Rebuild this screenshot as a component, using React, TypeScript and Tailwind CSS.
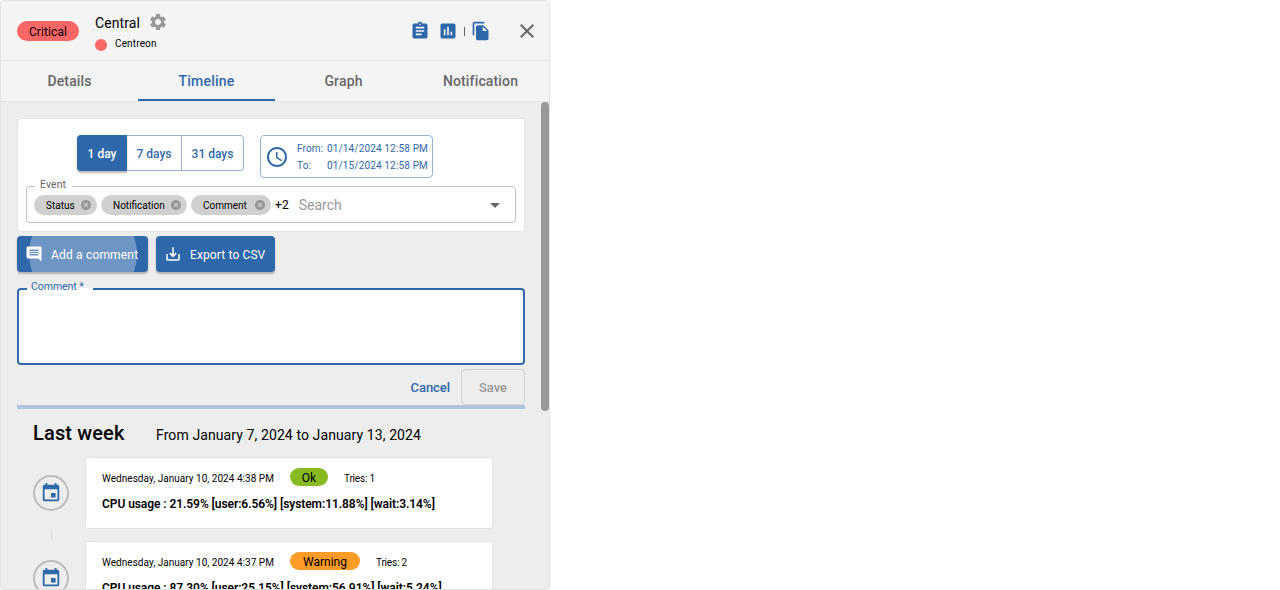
import type { ReactNode } from 'react';
import {
  MdSettings,
  MdAssignment,
  MdAssessment,
  MdFileCopy,
  MdClose,
  MdAccessTime,
  MdCancel,
  MdArrowDropDown,
  MdComment,
  MdSaveAlt,
  MdEvent,
} from 'react-icons/md';

const tabs = ['Details', 'Timeline', 'Graph', 'Notification'];

const events = [
  {
    date: 'Wednesday, January 10, 2024 4:38 PM',
    status: 'Ok',
    statusClass: 'w-[38px] bg-[#88b922]',
    tries: 'Tries: 1',
    text: 'CPU usage : 21.59% [user:6.56%] [system:11.88%] [wait:3.14%]',
  },
  {
    date: 'Wednesday, January 10, 2024 4:37 PM',
    status: 'Warning',
    statusClass: 'w-[70px] bg-[#fd9b27]',
    tries: 'Tries: 2',
    text: 'CPU usage : 87.30% [user:25.15%] [system:56.91%] [wait:5.24%]',
  },
];

function Header() {
  return (
    <header className="flex h-[60px] shrink-0 items-start border-b border-[#e3e3e3] bg-[#f4f4f4] pl-4">
      <div className="mt-5 flex h-5 w-[62px] items-center justify-center rounded-full bg-[#ff6666] text-xs tracking-[0.1px]">
        <span className="mt-[2px]">Critical</span>
      </div>
      <div className="ml-4 mt-3 flex flex-col">
        <div className="flex h-[20px] items-center text-sm leading-5 tracking-[0.1px]">
          <span className="w-[45px]">Central</span>
          <MdSettings className="ml-[8px] -mt-[2px] size-5 text-[#999999]" />
        </div>
        <div className="mt-px flex h-5 items-center text-[10px] tracking-[0.15px]">
          <span className="mt-px size-3 rounded-full bg-[#ff6666]" />
          <span className="-mt-px ml-2">Centreon</span>
        </div>
      </div>
      <div className="ml-auto flex h-[60px] items-center">
        <MdAssignment className="size-5 text-[#2e68aa]" />
        <MdAssessment className="ml-2 size-5 text-[#2e68aa]" />
        <span className="ml-[6px] h-[9px] w-px bg-[#666666]" />
        <MdFileCopy className="ml-[6px] size-5 text-[#2e68aa]" />
        <MdClose className="ml-[24px] mr-[10px] size-6 text-[#666666]" />
      </div>
    </header>
  );
}

function Tabs() {
  return (
    <nav className="grid h-[41px] shrink-0 grid-cols-4 border-b border-[#e3e3e3] bg-[#f4f4f4]">
      {tabs.map((tab) => (
        <div
          key={tab}
          className={
            tab === 'Timeline'
              ? 'flex items-center justify-center border-b-2 border-[#2e68aa] pt-[2px] text-sm font-medium tracking-[0.25px] text-[#2e68aa]'
              : 'flex items-center justify-center border-b-2 border-transparent pt-[2px] text-sm font-medium tracking-[0.15px] text-[#666666]'
          }
        >
          {tab}
        </div>
      ))}
    </nav>
  );
}

function Chip({ label, width }: { label: string; width: string }) {
  return (
    <span className={`flex h-5 items-center justify-between rounded-full bg-[#d0d0d0] pl-3 pr-[5px] text-[10px] ${width}`}>
      <span>{label}</span>
      <MdCancel className="size-3 text-[#969696]" />
    </span>
  );
}

function Filters() {
  return (
    <section className="flex h-[114px] shrink-0 flex-col rounded border border-[#e3e3e3] bg-white px-2 pt-4">
      <div className="flex h-[43px] items-start pl-[51px] text-[#2e68aa]">
        <div className="flex h-9 text-xs font-medium">
          <span className="flex w-[50px] items-center justify-center rounded-l bg-[#2e68aa] pt-[2px] text-white shadow-[0_2px_2px_rgba(0,0,0,0.28)]">
            1 day
          </span>
          <span className="flex w-[55px] items-center justify-center border-y border-r border-[#96b3d4] pt-[2px]">
            7 days
          </span>
          <span className="flex w-[62px] items-center justify-center rounded-r border-y border-r border-[#96b3d4] pt-[2px]">
            31 days
          </span>
        </div>
        <div className="ml-4 flex h-[43px] w-[173px] items-center rounded border border-[#96b3d4] pl-1">
          <MdAccessTime className="size-6" />
          <div className="ml-2 grid grid-cols-[30px_auto] text-[10px] leading-[17px] tracking-[0.15px]">
            <span>From:</span>
            <span className="whitespace-nowrap">01/14/2024 12:58 PM</span>
            <span>To:</span>
            <span className="whitespace-nowrap">01/15/2024 12:58 PM</span>
          </div>
        </div>
      </div>
      <fieldset className="flex h-[45px] w-[490px] flex-col rounded border border-[#c0c0c0]">
        <legend className="ml-[8px] h-4 w-[37px] pl-[5px] text-[10.5px] leading-[13px] tracking-[0.1px] text-[#666666]">
          Event
        </legend>
        <div className="flex h-[22px] items-center gap-1 pl-[7px]">
          <Chip label="Status" width="w-[63px]" />
          <Chip label="Notification" width="w-[86px]" />
          <Chip label="Comment" width="w-[80px]" />
          <span className="text-xs tracking-[0.1px]">+2</span>
          <span className="ml-[6px] text-sm text-[#999999]">Search</span>
          <MdArrowDropDown className="ml-auto mr-2 size-6 text-[#666666]" />
        </div>
      </fieldset>
    </section>
  );
}

function ActionButton({ children, className }: { children: ReactNode; className: string }) {
  return (
    <button
      className={`relative flex h-9 items-center overflow-hidden rounded bg-[#2e68aa] text-xs text-white shadow-[0_2px_2px_rgba(0,0,0,0.25)] ${className}`}
    >
      {children}
    </button>
  );
}

function CommentForm() {
  return (
    <section className="shrink-0">
      <fieldset className="mt-[6px] h-[87px] rounded border-2 border-[#2e68aa] bg-white">
        <legend className="ml-[8px] h-[21px] w-[66px] whitespace-nowrap pl-1 text-[10.5px] leading-[17px] tracking-[-0.05px] text-[#2e68aa]">
          Comment *
        </legend>
      </fieldset>
      <div className="mt-1 flex h-9 justify-end text-[13px] font-medium">
        <button className="mr-[11px] pt-[2px] tracking-[-0.05px] text-[#2e68aa]">Cancel</button>
        <button className="w-16 rounded border border-[#d0d0d0] pt-[2px] text-[#999999]">Save</button>
      </div>
    </section>
  );
}

function TimelineEvent({ event, last }: { event: (typeof events)[number]; last: boolean }) {
  return (
    <div className="flex h-[84px] shrink-0 pl-4">
      <div className={last ? 'flex w-9 flex-col items-center pt-[19px]' : 'flex w-9 flex-col items-center pt-[18px]'}>
        <span className="flex size-9 shrink-0 items-center justify-center rounded-full border-2 border-[#bdbdbd]">
          <MdEvent className="size-[22px] text-[#2e68aa]" />
        </span>
        {!last && <span className="mt-[18px] h-3 w-px shrink-0 bg-[#dddddd]" />}
      </div>
      <article className="ml-4 flex h-[72px] w-[408px] flex-col rounded border border-[#e3e3e3] bg-white px-4 pt-[10px]">
        <div className="flex h-[18px] items-center text-[10px]">
          <span className="w-[172px] whitespace-nowrap pt-[2px] tracking-[0.03px]">{event.date}</span>
          <span
            className={`ml-4 flex h-[18px] items-center justify-center rounded-full pt-[2px] text-xs ${event.statusClass}`}
          >
            {event.status}
          </span>
          <span className="ml-4 pt-[2px] tracking-[-0.2px]">{event.tries}</span>
        </div>
        <p className="mt-[9px] whitespace-nowrap text-xs font-semibold leading-[18px] tracking-[-0.07px]">{event.text}</p>
      </article>
    </div>
  );
}

export default function App() {
  return (
    <main className="flex h-[590px] w-[550px] flex-col overflow-hidden rounded border border-[#e3e3e3] bg-[#ededed] font-['Roboto',sans-serif] text-black">
      <Header />
      <Tabs />
      <div className="flex min-h-0 flex-1">
        <div className="flex w-[524px] flex-col overflow-hidden pl-4 pt-4">
          <Filters />
          <div className="mt-1 flex h-9 shrink-0 gap-2">
            <ActionButton className="w-[131px] pl-2">
              <span className="absolute -top-[36px] left-[12px] size-[108px] rounded-full bg-[#6d96c5]" />
              <MdComment className="relative size-[18px]" />
              <span className="relative ml-2 whitespace-nowrap pt-[2px] tracking-[0.18px]">Add a comment</span>
            </ActionButton>
            <ActionButton className="w-[119px] pl-2">
              <MdSaveAlt className="size-[18px]" />
              <span className="ml-2 whitespace-nowrap pt-[2px] tracking-[0.12px]">Export to CSV</span>
            </ActionButton>
          </div>
          <CommentForm />
          <div className="h-1 shrink-0 bg-[#afc4de]" />
          <div className="flex h-12 shrink-0 items-baseline pl-4 pt-[10px]">
            <h2 className="w-[123px] text-xl font-medium tracking-[0.15px]">Last week</h2>
            <span className="text-sm tracking-[0.1px]">From January 7, 2024 to January 13, 2024</span>
          </div>
          {events.map((event, i) => (
            <TimelineEvent key={event.date} event={event} last={i === events.length - 1} />
          ))}
        </div>
        <div className="ml-auto h-[309px] w-2 rounded bg-[#999999]" />
      </div>
    </main>
  );
}
